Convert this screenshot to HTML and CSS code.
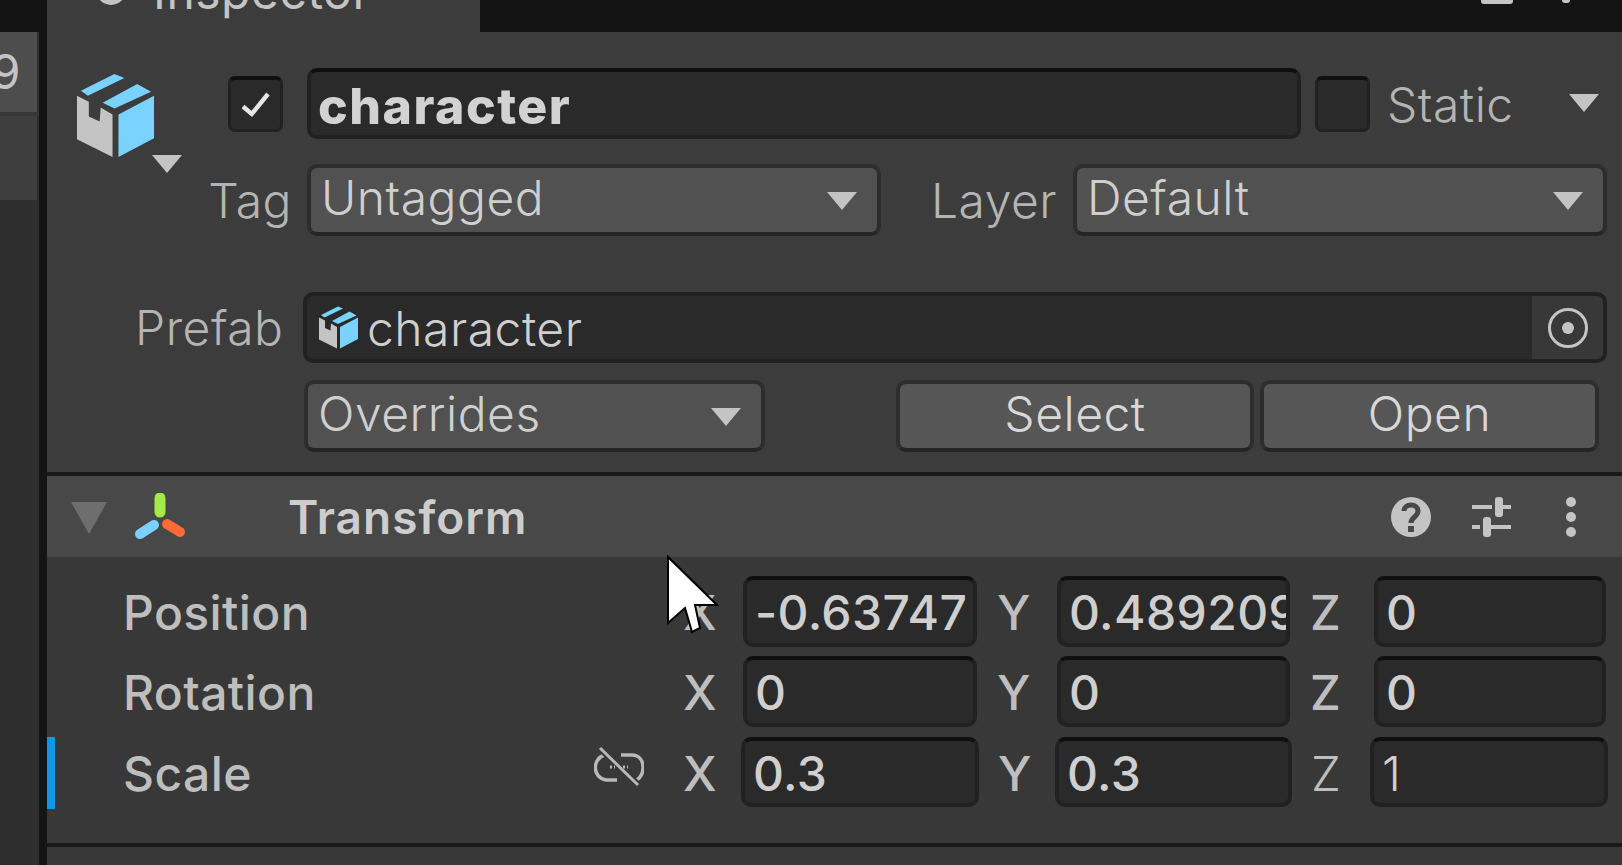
FILE: index.html
```html
<!DOCTYPE html>
<html lang="en">
<head>
<meta charset="utf-8">
<title>Inspector</title>
<link rel="stylesheet" href="styles.css">
</head>
<body>
<svg class="defs" width="0" height="0">
  <symbol id="box" viewBox="75 72 82 88">
    <polygon fill="#7ad3ff" points="81,91 115,74 125,78 88,96"/>
    <polygon fill="#7ad3ff" points="103,103 138,84 152,92 115,109"/>
    <polygon fill="#7ad3ff" points="119,115 155,96 155,139 119,158"/>
    <polygon fill="#c4c4c4" points="77,96 89,102 89,117 100,122 101,108 113,115 113,158 77,140"/>
  </symbol>
</svg>
<div class="app">
  <aside class="side">
    <div class="side-top"></div>
    <div class="side-item side-num"><span>9</span></div>
    <div class="side-gap"></div>
    <div class="side-item2"></div>
  </aside>
  <main class="inspector">
    <div class="tabs">
      <div class="tab">
        <span class="tab-dot"></span>
        <span class="tab-label">Inspector</span>
      </div>
      <span class="tab-lock"></span>
      <span class="tab-menu"></span>
    </div>
    <section class="head">
      <div class="identity">
        <div class="go-icon">
          <svg class="box-big"><use href="#box"/></svg>
          <span class="tri tri-icon"></span>
        </div>
        <div class="identity-body">
          <div class="name-row">
            <span class="check">
              <svg width="33" height="30" viewBox="0 0 26 24"><path d="M3 14 L10 20 L23 4" fill="none" stroke="#e6e6e6" stroke-width="3.5"/></svg>
            </span>
            <div class="name-field">character</div>
            <span class="check check-off"></span>
            <span class="static-label">Static</span>
            <span class="tri tri-static"></span>
          </div>
          <div class="tag-row">
            <span class="tag-label">Tag</span>
            <div class="drop drop-tag"><span>Untagged</span><i class="tri"></i></div>
            <span class="layer-label">Layer</span>
            <div class="drop drop-layer"><span>Default</span><i class="tri"></i></div>
          </div>
        </div>
      </div>
      <div class="prefab-row">
        <span class="prefab-label">Prefab</span>
        <div class="prefab-field">
          <svg class="box-small"><use href="#box"/></svg>
          <span class="prefab-name">character</span>
          <span class="target">
            <svg width="42" height="42" viewBox="0 0 42 42"><circle cx="21" cy="21" r="18.5" fill="none" stroke="#c4c4c4" stroke-width="3"/><circle cx="21" cy="21" r="6" fill="#c4c4c4"/></svg>
          </span>
        </div>
      </div>
      <div class="action-row">
        <div class="drop drop-over"><span>Overrides</span><i class="tri"></i></div>
        <button class="btn btn-select">Select</button>
        <button class="btn btn-open">Open</button>
      </div>
    </section>
    <section class="comp-head">
      <span class="fold"></span>
      <svg class="axes" width="56" height="50" viewBox="0 0 56 50">
        <path d="M28 5 V19" stroke="#a6ea47" stroke-width="11" stroke-linecap="round"/>
        <path d="M8 41 L22 32" stroke="#7ad3ff" stroke-width="10" stroke-linecap="round"/>
        <path d="M35 31 L48 39" stroke="#ff6a35" stroke-width="10" stroke-linecap="round"/>
      </svg>
      <span class="comp-title">Transform</span>
      <svg class="comp-tools" width="190" height="46" viewBox="0 0 190 46">
        <circle cx="21" cy="23" r="20" fill="#c4c4c4"/>
        <path d="M14 17 C14 9 28 9 28 17 C28 23 21 23 21 29" fill="none" stroke="#484848" stroke-width="5"/>
        <rect x="18" y="32" width="6" height="6" fill="#484848"/>
        <path d="M82 13 H102 M108 13 H121 M82 33 H90 M96 33 H121" stroke="#c4c4c4" stroke-width="4"/>
        <rect x="105" y="3" width="8" height="20" rx="3" fill="#c4c4c4"/>
        <rect x="93" y="23" width="8" height="20" rx="3" fill="#c4c4c4"/>
        <circle cx="181" cy="8" r="5" fill="#c4c4c4"/>
        <circle cx="181" cy="23" r="5" fill="#c4c4c4"/>
        <circle cx="181" cy="38" r="5" fill="#c4c4c4"/>
      </svg>
    </section>
    <section class="comp-body">
      <div class="prop">
        <div class="prop-name"><span>Position</span></div>
        <span class="axis"><span>X</span></span>
        <div class="num"><span>-0.63747</span></div>
        <span class="axis"><span>Y</span></span>
        <div class="num"><span>0.489209</span></div>
        <span class="axis axis-z"><span>Z</span></span>
        <div class="num"><span>0</span></div>
      </div>
      <div class="prop">
        <div class="prop-name"><span>Rotation</span></div>
        <span class="axis"><span>X</span></span>
        <div class="num"><span>0</span></div>
        <span class="axis"><span>Y</span></span>
        <div class="num"><span>0</span></div>
        <span class="axis axis-z"><span>Z</span></span>
        <div class="num"><span>0</span></div>
      </div>
      <div class="prop prop-scale">
        <span class="override"></span>
        <div class="prop-name"><span>Scale</span>
          <svg class="link" width="50" height="42" viewBox="0 0 50 42">
            <g fill="none" stroke="#b8b8b8" stroke-width="3.5">
              <path d="M11 9 C-2 12 -2 32 12 34 H23"/>
              <path d="M27 9 H38 C52 9 52 30 42 34"/>
              <path d="M6 2 L44 39" stroke="#383838" stroke-width="7"/>
              <path d="M6 2 L44 39" stroke-width="3"/>
              <path d="M16 21 H21 M29 21 H34" stroke-width="3" stroke-dasharray="2 2"/>
            </g>
          </svg>
        </div>
        <span class="axis"><span>X</span></span>
        <div class="num"><span>0.3</span></div>
        <span class="axis"><span>Y</span></span>
        <div class="num"><span>0.3</span></div>
        <span class="axis axis-z"><span class="thin">Z</span></span>
        <div class="num"><span class="thin">1</span></div>
      </div>
    </section>
    <section class="comp-next"></section>
  </main>
</div>
<svg class="cursor" width="60" height="84" viewBox="0 0 60 84">
  <polygon points="8,7 8,73 25,58 32,82 40,78 35,55 57,55" fill="#fff" stroke="#000" stroke-width="2"/>
</svg>
</body>
</html>
```
FILE: styles.css
```css
* { box-sizing: border-box; }
html, body { margin: 0; height: 100%; overflow: hidden; background: #3c3c3c; }
body { font-family: Inter, "Noto Sans", sans-serif; font-size: 48px; letter-spacing: .5px; color: #c4c4c4; position: relative; }
.defs { position: absolute; }
.app { display: flex; height: 865px; width: 1622px; }

.side { width: 47px; flex: none; display: flex; flex-direction: column; background: #2e2e2e; border-right: 8px solid #141414; }
.side-top { height: 32px; background: #141414; }
.side-item { height: 80px; background: #4d4d4d; margin-right: 2px; }
.side-num { display: flex; justify-content: flex-end; align-items: center; padding-right: 16px; line-height: 80px; overflow: hidden; }
.side-gap { height: 4px; background: #373737; }
.side-item2 { height: 84px; background: #3e3e3e; margin-right: 2px; }

.inspector { flex: 1; display: flex; flex-direction: column; min-width: 0; }
.tabs { height: 32px; background: #141414; display: flex; position: relative; flex: none; }
.tab { width: 433px; height: 32px; background: #3c3c3c; overflow: hidden; display: flex; align-items: flex-end; padding-left: 49px; gap: 27px; }
.tab-dot { width: 30px; height: 30px; border-radius: 50%; background: #c4c4c4; margin-bottom: 27px; flex: none; }
.tab-label { line-height: 56px; margin-bottom: 12px; flex: none; }
.tab-lock { width: 32px; height: 4px; background: #c4c4c4; margin-left: 1001px; border-radius: 0 0 3px 3px; }
.tab-menu { width: 8px; height: 3px; background: #c4c4c4; margin-left: 49px; border-radius: 0 0 4px 4px; }

.tri { display: block; width: 0; height: 0; flex: none; border-left: 15px solid transparent; border-right: 15px solid transparent; border-top: 18px solid #c4c4c4; }

.head { height: 440px; flex: none; background: #3c3c3c; padding-top: 36px; }
.identity { display: flex; }
.go-icon { width: 158px; flex: none; padding: 4px 0 0 28px; position: relative; }
.box-big { width: 81px; height: 87px; display: block; }
.tri-icon { position: absolute; left: 105px; top: 87px; }
.identity-body { flex: 1; min-width: 0; padding-right: 15px; }
.name-row { display: flex; align-items: center; height: 71px; }
.check { width: 55px; height: 56px; flex: none; margin-left: 23px; background: #2a2a2a; border: 3px solid #212121; border-top: 4px solid #0f0f0f; border-radius: 7px; display: flex; align-items: center; justify-content: center; }
.check-off { margin-left: 14px; }
.name-field { flex: 1; margin-left: 24px; height: 71px; background: #2a2a2a; border: 4px solid #212121; border-top-color: #0f0f0f; border-radius: 10px; font-weight: 800; font-size: 50px; letter-spacing: 1.5px; color: #d2d2d2; line-height: 68px; padding-left: 7px; }
.static-label { margin-left: 17px; width: 182px; flex: none; color: #b4b4b4; line-height: 71px; font-weight: 300; padding-top: 1px; }
.tri-static { margin-right: 8px; margin-top: -2px; }
.tag-row { display: flex; align-items: center; margin-top: 25px; height: 72px; }
.tag-label { width: 87px; flex: none; margin-right: 15px; text-align: right; color: #b4b4b4; font-weight: 300; }
.drop { height: 72px; display: flex; align-items: center; justify-content: space-between; background: #515151; border: 4px solid #2d2d2d; border-bottom-color: #242424; border-radius: 10px; padding: 0 20px 4px 10px; line-height: 60px; color: #cfcfcf; font-weight: 350; }
.drop .tri { margin-top: 6px; }
.drop-tag { width: 574px; flex: none; }
.layer-label { width: 192px; flex: none; padding-left: 50px; color: #b4b4b4; font-weight: 300; }
.drop-layer { flex: 1; }

.prefab-row { display: flex; align-items: center; margin-top: 56px; padding-right: 15px; }
.prefab-label { width: 256px; flex: none; padding-left: 88px; color: #b4b4b4; font-weight: 300; }
.prefab-field { flex: 1; height: 71px; display: flex; align-items: center; background: #2a2a2a; border: 4px solid #212121; border-radius: 10px; overflow: hidden; padding-left: 11px; }
.box-small { width: 41px; height: 45px; flex: none; }
.prefab-name { flex: 1; padding: 3px 0 0 8px; font-weight: 350; color: #cfcfcf; line-height: 60px; }
.target { width: 71px; height: 100%; flex: none; background: #383838; display: flex; align-items: center; justify-content: center; }

.action-row { display: flex; align-items: center; margin-top: 17px; padding: 0 23px 0 257px; }
.drop-over { width: 461px; flex: none; }
.btn { height: 72px; font: inherit; font-weight: 350; letter-spacing: .5px; color: #d8d8d8; background: #565656; border: 4px solid #2d2d2d; border-bottom-color: #242424; border-radius: 10px; padding: 0 0 4px; line-height: 58px; }
.btn-select { width: 358px; margin-left: 131px; }
.btn-open { flex: 1; margin-left: 6px; }

.comp-head { height: 85px; flex: none; background: #484848; border-top: 4px solid #191919; display: flex; align-items: center; position: relative; }
.fold { flex: none; margin-left: 24px; margin-top: 3px; width: 0; height: 0; border-left: 18px solid transparent; border-right: 18px solid transparent; border-top: 32px solid #6e6e6e; }
.axes { flex: none; margin-left: 25px; margin-top: 3px; }
.comp-title { margin-left: 100px; font-weight: 600; font-size: 46px; letter-spacing: 1px; color: #cdcdcd; flex: 1; }
.comp-tools { flex: none; margin-right: 42px; }

.comp-body { height: 286px; flex: none; background: #383838; padding-top: 19px; position: relative; display: flex; flex-direction: column; gap: 9px; letter-spacing: .4px; }
.prop { height: 71px; display: grid; grid-template-columns: 636px 60px 234px 80px 233px 84px 232px; align-items: stretch; position: relative; }
.prop-name { display: flex; align-items: center; padding: 2px 0 0 76px; font-weight: 550; position: relative; overflow: hidden; color: #bebebe; }
.thin { font-weight: 300; }
.axis { display: flex; align-items: center; padding-top: 2px; font-weight: 550; color: #bebebe; }
.axis + .num + .axis { padding-left: 20px; }
.axis-z.axis { padding-left: 28px; }
.num { height: 71px; background: #2a2a2a; border: 4px solid #212121; border-top-color: #0f0f0f; border-radius: 10px; padding: 2px 0 0 8px; overflow: hidden; white-space: nowrap; display: flex; align-items: center; font-weight: 500; color: #cfcfcf; }
.prop-scale { height: 70px; grid-template-columns: 636px 58px 238px 76px 237px 78px 238px; margin-top: 1px; }
.prop-scale .axis:first-of-type { padding-left: 2px; }
.prop-scale .axis + .num + .axis { padding-left: 19px; }
.prop-scale .axis-z.axis { padding-left: 24px; }
.prop-scale .num { height: 70px; }
.override { position: absolute; left: 0; top: 0; width: 8px; height: 72px; background: #0b98e8; }
.link { position: absolute; left: 547px; top: 9px; }

.comp-next { flex: 1; background: #383838; border-top: 4px solid #191919; }

.cursor { position: absolute; left: 660px; top: 550px; }
```
